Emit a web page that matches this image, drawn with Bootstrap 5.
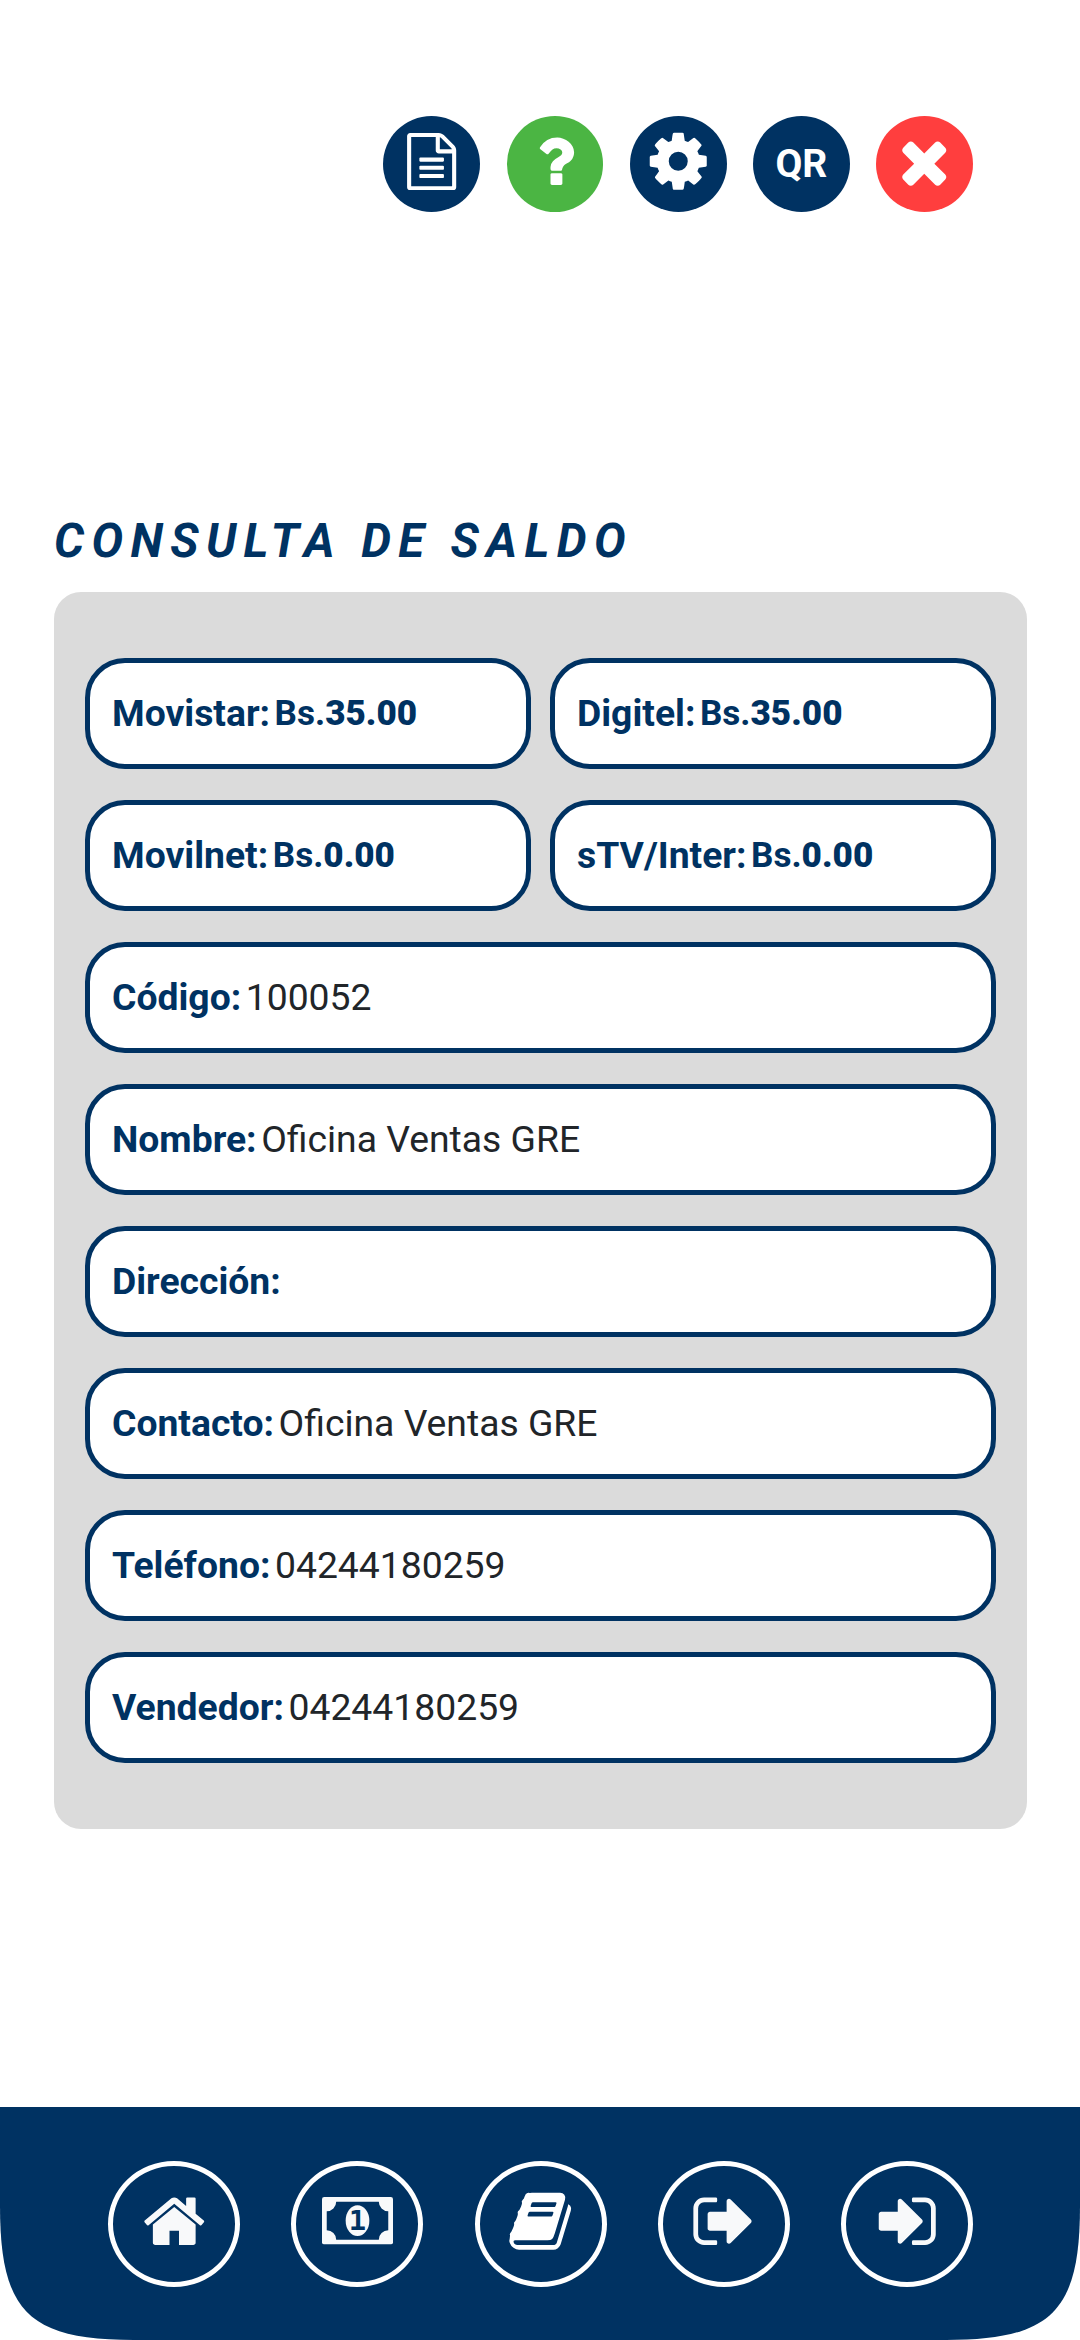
<!DOCTYPE html>
<html lang="es">
<head>
<meta charset="utf-8">
<meta name="viewport" content="width=device-width, initial-scale=1">
<title>Consulta de saldo</title>
<link href="https://cdn.jsdelivr.net/npm/bootstrap@5.3.0/dist/css/bootstrap.min.css" rel="stylesheet">
<style>
:root { --navy: #003262; }
body { font-family: Roboto, sans-serif; background: #fff; height: 2340px; }
.top-actions { padding: 116px 107px 0 0; gap: 26.4px; }
.round-btn { width: 96.8px; height: 96px; color: #fff; background: var(--navy); font-size: 39px; font-weight: 700; }
.round-btn svg, .tab-btn svg { width: 66.5px; height: 66.5px; fill: currentColor; flex: none; margin-bottom: 5px; }
.round-btn svg.icon-file { width: 57.3px; height: 57.3px; }
.bg-help { background: #4bb543; }
.bg-exit { background: #ff3e3e; }
.content-area { padding: 0 53px 0 54px; margin-top: 296px; }
.page-title { color: var(--navy); font-size: 47.3px; font-style: italic; font-weight: 700; letter-spacing: 7.4px; line-height: 66px; height: 84px; }
.balance-panel { background: #dbdbdb; border-radius: 27px; padding: 66px 31px; gap: 31px; }
.pair { gap: 19px; }
.field-pill { height: 111px; border: 5px solid var(--navy); border-radius: 40px; background: #fff; padding: 0 22px; font-size: 37.3px; gap: 4.5px; white-space: nowrap; }
.field-pill b { color: var(--navy); font-weight: 700; }
.amount { color: var(--navy); font-size: 35.1px; font-weight: 700; }
.field-pill .amount b { font-weight: 900; }
.bottom-nav { height: 233px; background: var(--navy); clip-path: path("M0 0H1080V99C1080 204.500 1051.500 233 946 233H134C28.500 233 0 204.500 0 99Z"); padding: 54px 107px 0 108px; }
.tab-btn { width: 132px; height: 126px; border: 5px solid #fff; color: #f8f9fa; }
.tab-btn svg { margin-bottom: 6px; }
.tab-btn svg.icon-money { width: 71px; height: 47.4px; }
</style>
</head>
<body class="d-flex flex-column">
<header class="top-actions d-flex justify-content-end">
  <a class="round-btn rounded-circle d-flex align-items-center justify-content-center"><svg class="icon-file" viewBox="0 0 1792 1792"><path d="M1596 380q28 28 48 76t20 88v1152q0 40-28 68t-68 28h-1344q-40 0-68-28t-28-68v-1600q0-40 28-68t68-28h896q40 0 88 20t76 48zm-444-244v376h376q-10-29-22-41l-313-313q-12-12-41-22zm384 1528v-1024h-416q-40 0-68-28t-28-68v-416h-768v1536h1280zm-1024-864q0-14 9-23t23-9h704q14 0 23 9t9 23v64q0 14-9 23t-23 9h-704q-14 0-23-9t-9-23v-64zm736 224q14 0 23 9t9 23v64q0 14-9 23t-23 9h-704q-14 0-23-9t-9-23v-64q0-14 9-23t23-9h704zm0 256q14 0 23 9t9 23v64q0 14-9 23t-23 9h-704q-14 0-23-9t-9-23v-64q0-14 9-23t23-9h704z"/></svg></a>
  <a class="round-btn bg-help rounded-circle d-flex align-items-center justify-content-center"><svg viewBox="0 0 1792 1792"><path d="M1088 1256v240q0 16-12 28t-28 12h-240q-16 0-28-12t-12-28v-240q0-16 12-28t28-12h240q16 0 28 12t12 28zm316-600q0 54-15.5 101t-35 76.5-55 59.5-57.5 43.5-61 35.5q-41 23-68.5 65t-27.5 67q0 17-12 32.5t-28 15.5h-240q-15 0-25.5-18.5t-10.5-37.5v-45q0-83 65-156.5t143-108.5q59-27 84-56t25-76q0-42-46.5-74t-107.5-32q-65 0-108 29-35 25-107 115-13 16-31 16-12 0-25-8l-164-125q-13-10-15.5-25t5.5-28q160-266 464-266 80 0 161 31t146 83 106 127.5 41 158.5z"/></svg></a>
  <a class="round-btn rounded-circle d-flex align-items-center justify-content-center"><svg viewBox="0 0 1792 1792"><path d="M1152 896q0-106-75-181t-181-75-181 75-75 181 75 181 181 75 181-75 75-181zm512-109v222q0 12-8 23t-20 13l-185 28q-19 54-39 91 35 50 107 138 10 12 10 25t-9 23q-27 37-99 108t-94 71q-12 0-26-9l-138-108q-44 23-91 38-16 136-29 186-7 28-36 28h-222q-14 0-24.5-8.5t-11.5-21.5l-28-184q-49-16-90-37l-141 107q-10 9-25 9-14 0-25-11-126-114-165-168-7-10-7-23 0-12 8-23 15-21 51-66.5t54-70.5q-27-50-41-99l-183-27q-13-2-21-12.5t-8-23.5v-222q0-12 8-23t19-13l186-28q14-46 39-92-40-57-107-138-10-12-10-24 0-10 9-23 26-36 98.5-107.5t94.5-71.5q13 0 26 10l138 107q44-23 91-38 16-136 29-186 7-28 36-28h222q14 0 24.5 8.5t11.5 21.5l28 184q49 16 90 37l142-107q9-9 24-9 13 0 25 10 129 119 165 170 7 8 7 22 0 12-8 23-15 21-51 66.5t-54 70.5q26 50 41 98l183 28q13 2 21 12.5t8 23.5z"/></svg></a>
  <a class="round-btn rounded-circle d-flex align-items-center justify-content-center text-decoration-none">QR</a>
  <a class="round-btn bg-exit rounded-circle d-flex align-items-center justify-content-center"><svg viewBox="0 0 1792 1792"><path d="M1490 1322q0 40-28 68l-136 136q-28 28-68 28t-68-28l-294-294-294 294q-28 28-68 28t-68-28l-136-136q-28-28-28-68t28-68l294-294-294-294q-28-28-28-68t28-68l136-136q28-28 68-28t68 28l294 294 294-294q28-28 68-28t68 28l136 136q28 28 28 68t-28 68l-294 294 294 294q28 28 28 68z"/></svg></a>
</header>

<main class="content-area">
  <h1 class="page-title mb-0">CONSULTA DE SALDO</h1>
  <section class="balance-panel d-flex flex-column">
    <div class="pair d-flex">
      <div class="field-pill d-flex align-items-center flex-fill w-50"><b>Movistar:</b><span class="amount">Bs.<b>35.00</b></span></div>
      <div class="field-pill d-flex align-items-center flex-fill w-50"><b>Digitel:</b><span class="amount">Bs.<b>35.00</b></span></div>
    </div>
    <div class="pair d-flex">
      <div class="field-pill d-flex align-items-center flex-fill w-50"><b>Movilnet:</b><span class="amount">Bs.<b>0.00</b></span></div>
      <div class="field-pill d-flex align-items-center flex-fill w-50"><b>sTV/Inter:</b><span class="amount">Bs.<b>0.00</b></span></div>
    </div>
    <div class="field-pill d-flex align-items-center"><b>Código:</b><span>100052</span></div>
    <div class="field-pill d-flex align-items-center"><b>Nombre:</b><span>Oficina Ventas GRE</span></div>
    <div class="field-pill d-flex align-items-center"><b>Dirección:</b></div>
    <div class="field-pill d-flex align-items-center"><b>Contacto:</b><span>Oficina Ventas GRE</span></div>
    <div class="field-pill d-flex align-items-center"><b>Teléfono:</b><span>04244180259</span></div>
    <div class="field-pill d-flex align-items-center"><b>Vendedor:</b><span>04244180259</span></div>
  </section>
</main>

<nav class="bottom-nav mt-auto d-flex justify-content-between align-items-start">
  <a class="tab-btn rounded-circle d-flex align-items-center justify-content-center"><svg viewBox="0 0 1792 1792"><path d="M1472 992v480q0 26-19 45t-45 19h-384v-384h-256v384h-384q-26 0-45-19t-19-45v-480q0-1 .5-3t.5-3l575-474 575 474q1 2 1 6zm223-69l-62 74q-8 9-21 11h-3q-13 0-21-7l-692-577-692 577q-12 8-24 7-13-2-21-11l-62-74q-8-10-7-23.5t11-21.5l719-599q32-26 76-26t76 26l244 204v-195q0-14 9-23t23-9h192q14 0 23 9t9 23v408l219 182q10 8 11 21.5t-7 23.5z"/></svg></a>
  <a class="tab-btn rounded-circle d-flex align-items-center justify-content-center"><svg class="icon-money" viewBox="0 0 1920 1280"><rect width="1920" height="1280" rx="60"/><path fill="#003262" d="M384 128H1536a256 256 0 0 0 256 256V896a256 256 0 0 0-256 256H384a256 256 0 0 0-256-256V384a256 256 0 0 0 256-256z"/><ellipse cx="960" cy="640" rx="320" ry="416"/><text x="960" y="896" text-anchor="middle" textLength="470" lengthAdjust="spacingAndGlyphs" font-family="DejaVu Sans Mono" font-weight="700" font-size="720" fill="#003262">1</text></svg></a>
  <a class="tab-btn text-white rounded-circle d-flex align-items-center justify-content-center"><svg viewBox="0 0 1792 1792"><path d="M1703 478q40 57 18 129l-275 906q-19 64-76.5 107.5t-122.5 43.5h-923q-77 0-148.5-53.5t-99.5-131.5q-24-67-2-127 0-4 3-27t4-37q1-8-3-21.5t-3-19.5q2-11 8-21t16.5-23.5 16.5-23.5q23-38 45-91.5t30-91.5q3-10 .5-30t-.5-28q3-11 17-28t17-23q21-36 42-92t25-90q1-9-2.5-32t.5-28q4-13 22-30.5t22-22.5q19-26 42.5-84.5t27.5-96.5q1-8-3-25.5t-2-26.5q2-8 9-18t18-23 17-21q8-12 16.5-30.5t15-35 16-36 19.5-32 26.5-23.5 36-11.5 47.5 5.5l-1 3q38-9 51-9h761q74 0 114 56t18 130l-274 906q-36 119-71.5 153.5t-128.5 34.5h-869q-27 0-38 15-11 16-1 43 24 70 144 70h923q29 0 56-15.5t35-41.5l300-987q7-22 5-57 38 15 59 43zm-1064 2q-4 13 2 22.5t20 9.5h608q13 0 25.5-9.5t16.5-22.5l21-64q4-13-2-22.5t-20-9.5h-608q-13 0-25.5 9.5t-16.5 22.5zm-83 256q-4 13 2 22.5t20 9.5h608q13 0 25.5-9.5t16.5-22.5l21-64q4-13-2-22.5t-20-9.5h-608q-13 0-25.5 9.5t-16.5 22.5z"/></svg></a>
  <a class="tab-btn rounded-circle d-flex align-items-center justify-content-center"><svg viewBox="0 0 1792 1792"><path d="M704 1440q0 4 1 20t.5 26.5-3 23.5-10 19.5-20.5 6.5h-320q-119 0-203.5-84.5t-84.5-203.5v-704q0-119 84.5-203.5t203.5-84.5h320q13 0 22.5 9.5t9.5 22.5q0 4 1 20t.5 26.5-3 23.5-10 19.5-20.5 6.5h-320q-66 0-113 47t-47 113v704q0 66 47 113t113 47h312l11.5 1 11.5 3 8 5.5 7 9 2 13.5zm928-544q0 26-19 45l-544 544q-19 19-45 19t-45-19-19-45v-288h-448q-26 0-45-19t-19-45v-384q0-26 19-45t45-19h448v-288q0-26 19-45t45-19 45 19l544 544q19 19 19 45z"/></svg></a>
  <a class="tab-btn rounded-circle d-flex align-items-center justify-content-center"><svg viewBox="0 0 1792 1792"><path d="M1312 896q0 26-19 45l-544 544q-19 19-45 19t-45-19-19-45v-288h-448q-26 0-45-19t-19-45v-384q0-26 19-45t45-19h448v-288q0-26 19-45t45-19 45 19l544 544q19 19 19 45zm352-352v704q0 119-84.5 203.5t-203.5 84.5h-320q-13 0-22.5-9.5t-9.5-22.5q0-4-1-20t-.5-26.5 3-23.5 10-19.5 20.5-6.5h320q66 0 113-47t47-113v-704q0-66-47-113t-113-47h-312l-11.5-1-11.5-3-8-5.5-7-9-2-13.5q0-4-1-20t-.5-26.5 3-23.5 10-19.5 20.5-6.5h320q119 0 203.5 84.5t84.5 203.5z"/></svg></a>
</nav>
<script src="https://cdn.jsdelivr.net/npm/bootstrap@5.3.0/dist/js/bootstrap.bundle.min.js"></script>
</body>
</html>
